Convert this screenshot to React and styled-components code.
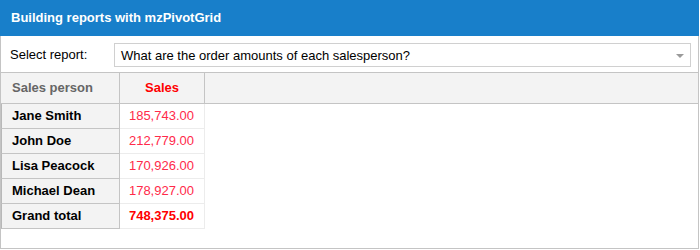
import React from "react";
import styled, { createGlobalStyle } from "styled-components";

const Global = createGlobalStyle`
  html, body { margin: 0; padding: 0; background: #ffffff; }
  body { font-family: "Liberation Sans", Arial, sans-serif; }
`;

const Panel = styled.div`
  width: 699px;
  height: 249px;
  box-sizing: border-box;
  border: 1px solid #c4c4c4;
  border-top: none;
  display: flex;
  flex-direction: column;
  background: #fff;
`;

const TitleBar = styled.div`
  height: 36px;
  margin: 0 -1px;
  background: #187fca;
  color: #fff;
  font-weight: bold;
  font-size: 13px;
  line-height: 36px;
  padding-left: 11px;
`;

const Toolbar = styled.div`
  height: 37px;
  box-sizing: border-box;
  border-bottom: 1px solid #c4c4c4;
  display: flex;
  align-items: flex-start;
  padding: 7px 7px 0 9px;
`;

const Label = styled.div`
  width: 104px;
  height: 24px;
  line-height: 24px;
  font-size: 13px;
  color: #000;
  flex: none;
`;

const Select = styled.div`
  flex: 1;
  height: 24px;
  box-sizing: border-box;
  border: 1px solid #d0d0d0;
  display: flex;
  align-items: center;
  justify-content: space-between;
  padding: 0 6px 0 6px;
  font-size: 13px;
  color: #000;
`;

const Arrow = styled.svg`
  width: 8px;
  height: 4px;
  margin-top: 1px;
`;

const Grid = styled.div`
  display: grid;
  grid-template-columns: 119px 85px 1fr;
`;

const HeadCell = styled.div`
  height: 31px;
  box-sizing: border-box;
  background: #f3f3f3;
  border-bottom: 1px solid #c4c4c4;
  border-right: ${(p) => (p.$last ? "none" : "1px solid #c4c4c4")};
  font-size: 13px;
  font-weight: bold;
  line-height: 30px;
  color: ${(p) => (p.$red ? "#ff0000" : "#666666")};
  text-align: ${(p) => (p.$center ? "center" : "left")};
  padding-left: ${(p) => (p.$center ? "0" : "11px")};
`;

const RowHead = styled.div`
  height: 25px;
  box-sizing: border-box;
  background: #f3f3f3;
  border-left: 1px solid #b8b8b8;
  border-right: 1px solid #c4c4c4;
  border-bottom: 1px solid #c4c4c4;
  font-size: 13px;
  font-weight: bold;
  color: #000;
  line-height: 24px;
  padding-left: 10px;
`;

const ValueCell = styled.div`
  height: 25px;
  box-sizing: border-box;
  border-right: 1px solid #ececec;
  border-bottom: 1px solid #ececec;
  font-size: 13px;
  font-weight: ${(p) => (p.$total ? "bold" : "normal")};
  color: ${(p) => (p.$total ? "#ff0000" : "#ff2a4a")};
  line-height: 24px;
  text-align: right;
  padding-right: 10px;
`;

const Empty = styled.div``;

const rows = [
  ["Jane Smith", "185,743.00"],
  ["John Doe", "212,779.00"],
  ["Lisa Peacock", "170,926.00"],
  ["Michael Dean", "178,927.00"],
];

export default function App() {
  return (
    <>
      <Global />
      <Panel>
        <TitleBar>Building reports with mzPivotGrid</TitleBar>
        <Toolbar>
          <Label>Select report:</Label>
          <Select>
            <span>What are the order amounts of each salesperson?</span>
            <Arrow viewBox="0 0 8 4">
              <path d="M0 0 H8 L4 4 Z" fill="#9a9a9a" />
            </Arrow>
          </Select>
        </Toolbar>
        <Grid>
          <HeadCell>Sales person</HeadCell>
          <HeadCell $red $center>Sales</HeadCell>
          <HeadCell $last />
          {rows.map(([name, val]) => (
            <React.Fragment key={name}>
              <RowHead>{name}</RowHead>
              <ValueCell>{val}</ValueCell>
              <Empty />
            </React.Fragment>
          ))}
          <RowHead>Grand total</RowHead>
          <ValueCell $total>748,375.00</ValueCell>
          <Empty />
        </Grid>
      </Panel>
    </>
  );
}
